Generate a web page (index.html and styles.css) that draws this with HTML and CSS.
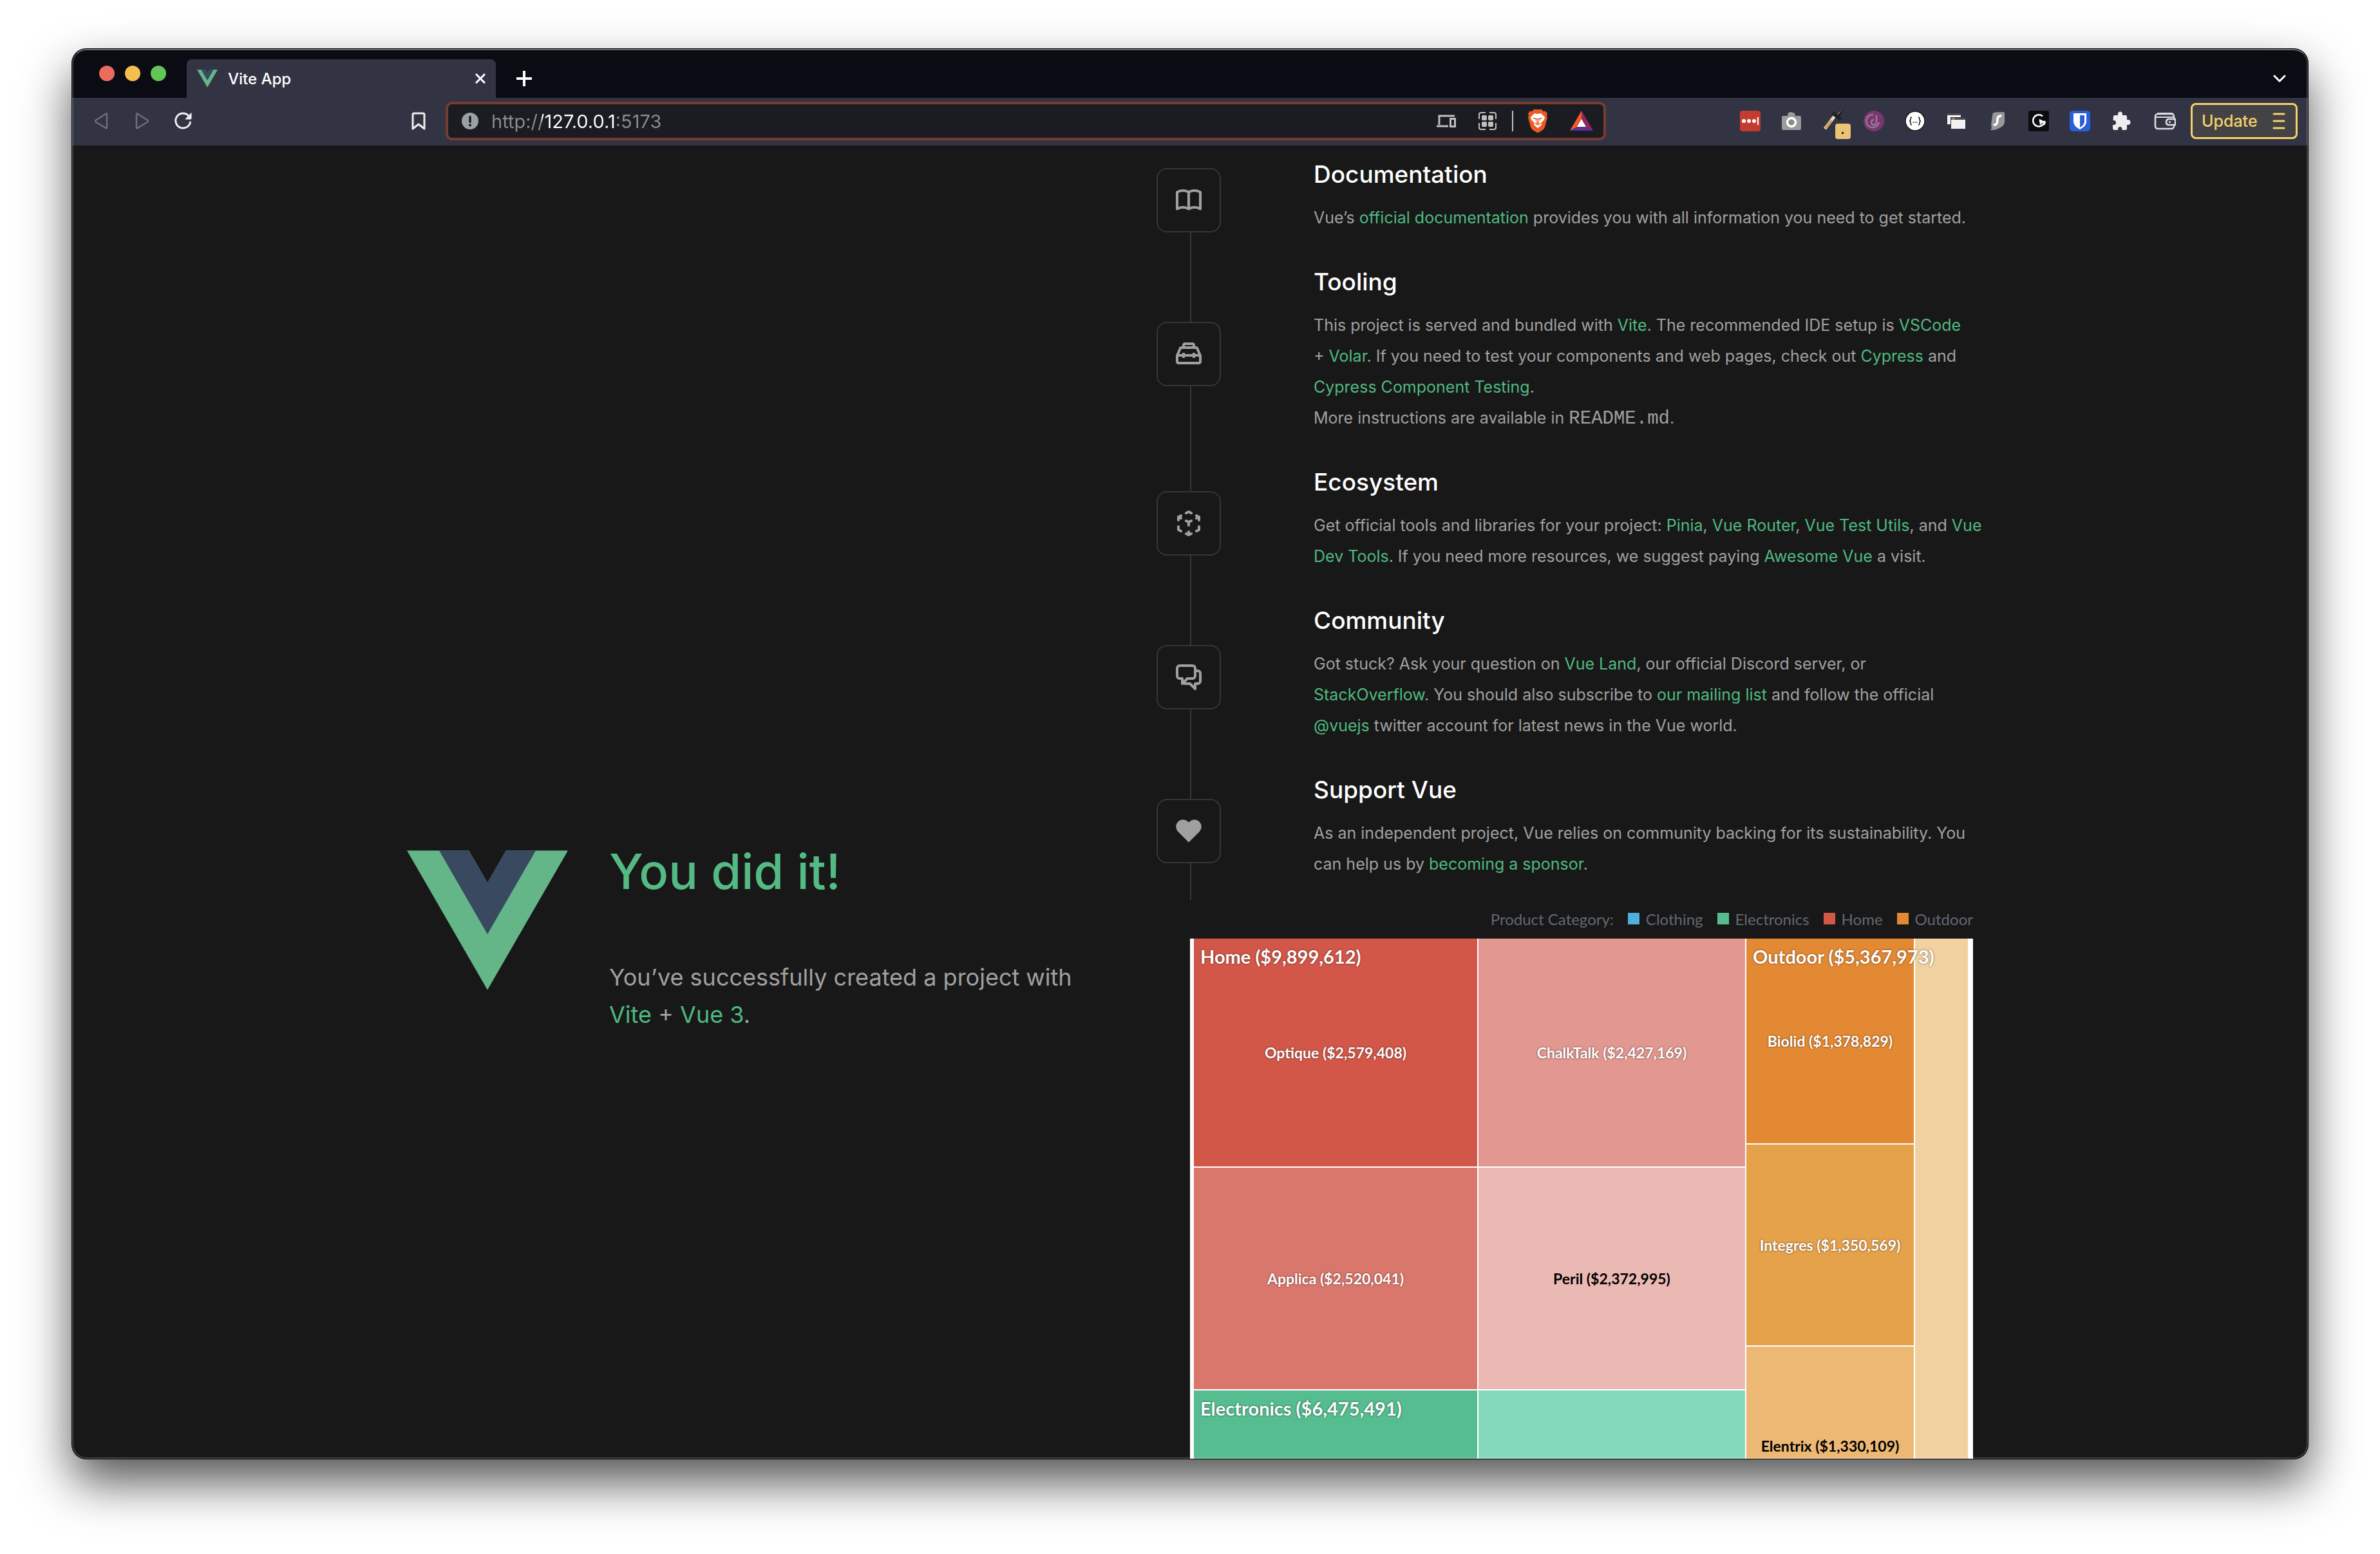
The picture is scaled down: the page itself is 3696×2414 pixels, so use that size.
FILE: index.html
```
<!DOCTYPE html>
<html lang="en">
<head>
<meta charset="utf-8">
<title>Vite App</title>
<link rel="stylesheet" href="styles.css">
</head>
<body>
<div class="window">
  <div class="tabstrip">
    <div class="lights">
      <button class="light light-close" aria-label="Close window"></button>
      <button class="light light-min" aria-label="Minimize window"></button>
      <button class="light light-max" aria-label="Zoom window"></button>
    </div>
    <div class="tab">
      <svg class="tab-icon" width="32" height="28" viewBox="0 0 261.76 226.69"><path d="M161.096.001l-30.225 52.351L100.647.001H-.005l130.877 226.688L261.749.001z" fill="#64b587"/><path d="M161.096.001l-30.225 52.351L100.647.001H52.346l78.526 136.01L209.398.001z" fill="#384960"/></svg>
      <span class="tab-title">Vite App</span>
      <button class="tab-close" aria-label="Close tab"><svg width="16" height="16" viewBox="0 0 16 16"><path d="M1 1l14 14M15 1L1 15" stroke="#fff" stroke-width="3" fill="none"/></svg></button>
    </div>
    <button class="strip-button" aria-label="New tab"><svg width="24" height="24" viewBox="0 0 24 24"><path d="M12 1v22M1 12h22" stroke="#fff" stroke-width="4" stroke-linecap="round"/></svg></button>
    <button class="strip-button strip-end" aria-label="Search tabs"><svg width="20" height="14" viewBox="0 0 20 14"><path d="M2 3l8 8 8-8" stroke="#fff" stroke-width="3" fill="none" stroke-linecap="round" stroke-linejoin="round"/></svg></button>
  </div>

  <div class="toolbar">
    <div class="nav">
      <button class="tool" aria-label="Back"><svg width="22" height="28" viewBox="0 0 22 28"><path d="M19 2.500Q20 2 20 4v20q0 2-1.500 1L3 15.500q-2-1.500 0-3z" fill="none" stroke="#6c6e78" stroke-width="2.500"/></svg></button>
      <button class="tool" aria-label="Forward"><svg width="22" height="28" viewBox="0 0 22 28"><path d="M3 2.500Q2 2 2 4v20q0 2 1.500 1L19 15.500q2-1.500 0-3z" fill="none" stroke="#6c6e78" stroke-width="2.500"/></svg></button>
      <button class="tool" aria-label="Reload"><svg width="30" height="28" viewBox="0 0 30 28"><path d="M22.500 5.500A11.500 11.500 0 1 0 25.500 16" fill="none" stroke="#eeeeef" stroke-width="3" stroke-linecap="round"/><path d="M27 1.500v8.500q0 1-1 1h-8z" fill="#eeeeef" stroke="#eeeeef" stroke-linejoin="round"/></svg></button>
      <button class="tool bookmark" aria-label="Bookmark"><svg width="22" height="28" viewBox="0 0 22 28"><path d="M2 4q0-2 2-2h14q2 0 2 2v22l-9-7-9 7z" fill="none" stroke="#eeeeef" stroke-width="3" stroke-linejoin="round"/></svg></button>
    </div>

    <div class="address">
      <svg width="26" height="26" viewBox="0 0 26 26"><circle cx="13" cy="13" r="13" fill="#9ba0a4"/><path d="M13 6.500v8" stroke="#1b1c21" stroke-width="3.400" stroke-linecap="round"/><circle cx="13" cy="19.500" r="2" fill="#1b1c21"/></svg>
      <input class="url" type="text" value="http://127.0.0.1:5173" aria-label="Address">
      <button class="tool" aria-label="Send to devices"><svg width="32" height="24" viewBox="0 0 32 24"><path d="M5 18V4h24M1 20h18" fill="none" stroke="#bfbfbf" stroke-width="3"/><rect x="22.500" y="8.500" width="7" height="12" fill="none" stroke="#bfbfbf" stroke-width="3"/></svg></button>
      <button class="tool" aria-label="QR code"><svg width="30" height="30" viewBox="0 0 30 30"><path d="M12 2H5Q2 2 2 5v7M18 2h7q3 0 3 3v7M12 28H5q-3 0-3-3v-7M18 28h7q3 0 3-3v-7" fill="none" stroke="#bfbfbf" stroke-width="2"/><g fill="#bfbfbf"><rect x="6" y="6" width="8" height="8" rx="2"/><rect x="16" y="6" width="8" height="8" rx="2"/><rect x="6" y="16" width="8" height="8" rx="2"/><rect x="16" y="16" width="8" height="8" rx="2"/></g></svg></button>
      <span class="divider"></span>
      <button class="tool" aria-label="Brave Shields"><svg width="32" height="38" viewBox="0 0 32 38"><path d="M10 1h12l3 3 3-.500 3 4-1 3 1 3-4 15q-1 3-4 5l-7 4-7-4q-3-2-4-5L1 13.500l1-3-1-3 3-4L7 4z" fill="#ee5a25"/><path d="M11 7l5 1 5-1 6 6-1 4-5 5 1 3-6 5-6-5 1-3-5-5-1-4z" fill="#fff"/><path d="M9 14.500l5 1-1 3M23 14.500l-5 1 1 3M16 15v6M12 22.500l4 2.500 4-2.500M14 20.500l2 2 2-2" fill="none" stroke="#ee5a25" stroke-width="1.500"/></svg></button>
      <button class="tool bat" aria-label="Brave Rewards"><svg width="36" height="32" viewBox="0 0 36 32"><path d="M18 0L0 31l12-6 6-11z" fill="#f05a33"/><path d="M18 0l18 31-12-6-6-11z" fill="#93255f"/><path d="M0 31h36l-12-6.500H12z" fill="#5c3195"/><path d="M18 13l-7 12h14z" fill="#fff"/></svg></button>
    </div>

    <div class="extensions">
      <button class="tool" aria-label="LastPass"><svg width="32" height="32" viewBox="0 0 32 32"><rect width="32" height="32" rx="4" fill="#c43c31"/><g fill="#fff"><circle cx="6" cy="16" r="3"/><circle cx="14" cy="16" r="3"/><circle cx="22" cy="16" r="3"/><path d="M27 10h2v12h-2z"/></g></svg></button>
      <button class="tool" aria-label="Screenshot"><svg width="32" height="32" viewBox="0 0 32 32"><path d="M3 8h7l1-5 5-1 5 2 1 4h7q2 0 2 2v17q0 3-2 3H3q-2 0-2-3V10q0-2 2-2z" fill="#9b9b9b"/><circle cx="16" cy="18" r="6.500" fill="#8a8a8a" stroke="#fff" stroke-width="3.500"/></svg></button>
      <button class="tool" aria-label="ColorZilla"><svg class="picker" width="64" height="50" viewBox="-18 -6 64 50"><path d="M2 31L18 10" stroke="#e4ddd0" stroke-width="5"/><path d="M3 30l9-12" stroke="#cf9a43" stroke-width="3.500"/><path d="M16 8l9 7M21 11l5-6" stroke="#222" stroke-width="6" stroke-linecap="round"/><path d="M22 8l4-4" stroke="#6b6b6b" stroke-width="2" stroke-linecap="round"/><rect x="18" y="23" width="24" height="24" rx="4" fill="#e9c376"/><rect x="28" y="36" width="3" height="3" fill="#222"/></svg></button>
      <button class="tool" aria-label="Grammar helper"><svg width="32" height="32" viewBox="0 0 32 32"><circle cx="16" cy="16" r="16" fill="#78386f"/><path d="M15 6a10 10 0 1 0 9 12M20 7v11a4 4 0 1 1-4-4" fill="none" stroke="#9a7a98" stroke-width="2.400"/></svg></button>
      <button class="tool" aria-label="JSON viewer"><svg width="32" height="32" viewBox="0 0 32 32"><circle cx="16" cy="16" r="15" fill="#fff" stroke="#1b1b1b" stroke-width="1.500"/><path d="M11 10q-2 0-2 3t-2 3q2 0 2 3t2 3M21 10q2 0 2 3t2 3q-2 0-2 3t-2 3" fill="none" stroke="#222" stroke-width="1.600"/><path d="M12.500 18h1.500M15.300 18h1.500M18 18h1.500" stroke="#222" stroke-width="1.400"/></svg></button>
      <button class="tool" aria-label="Window resizer"><svg width="32" height="32" viewBox="0 0 32 32"><rect x="2" y="4" width="21" height="17" fill="#f4f4f6"/><path d="M2 4h21v3H2z" fill="#4b4b4b"/><rect x="7" y="10" width="24" height="20" fill="#333445"/><rect x="8" y="11" width="22" height="17" fill="#f1f1f4"/><path d="M8 11h22v3H8z" fill="#4b4b4b"/><path d="M9 12.500h5" stroke="#d99a3b" stroke-width="1.500"/></svg></button>
      <button class="tool" aria-label="Surfshark"><svg width="32" height="32" viewBox="0 0 32 32"><path d="M10 3q2-1 15-1 2 0 2 2v13q0 9-17 13H5q3-3 1-8l2-14q0-4 2-5z" fill="#97979a"/><path d="M21 8q-5 0-5 6 0 8-5 8" fill="none" stroke="#fff" stroke-width="3.500" stroke-linecap="round"/></svg></button>
      <button class="tool" aria-label="Grammarly"><svg width="32" height="32" viewBox="0 0 32 32"><rect width="32" height="32" rx="3" fill="#0b0c10"/><path d="M22 8.500A9 9 0 1 0 25 17h-8M17 14l5 3-4 4M26 17l-2 5" fill="none" stroke="#fff" stroke-width="2.500"/></svg></button>
      <button class="tool" aria-label="Bitwarden"><svg width="32" height="32" viewBox="0 0 32 32"><rect width="32" height="32" rx="5" fill="#2a5fdb"/><path d="M6 4h20v13q0 7-10 12Q6 24 6 17z" fill="#fff"/><path d="M16 7h7v10q0 5-7 9z" fill="#2a5fdb"/></svg></button>
      <button class="tool" aria-label="Extensions"><svg width="32" height="32" viewBox="0 0 32 32"><path d="M4 9q0-2 2-2h5V5q0-3.500 3.500-3.500T18 5v2h5q2 0 2 2v5h1.500q4 0 4 4t-4 4H25v5q0 3-2 3h-5.500v-1.500q0-3.500-3.200-3.500T11 28.500V30H6q-3 0-3-3v-5h1.500Q8 22 8 18.500T4.500 15H3.500z" fill="#eeeeef"/></svg></button>
      <button class="tool wallet" aria-label="Wallet"><svg width="34" height="30" viewBox="0 0 34 30"><rect x="2" y="4" width="29" height="23" rx="4" fill="none" stroke="#dcdcdf" stroke-width="2.600"/><path d="M3 9h28M5 3h22q3 0 3 3" fill="none" stroke="#dcdcdf" stroke-width="2"/><path d="M33 12v9H22q-3-1-3-4.500t3-4.500z" fill="#323443" stroke="#dcdcdf" stroke-width="2.600"/><path d="M23 16.500h3" stroke="#dcdcdf" stroke-width="2.600"/></svg></button>
      <button class="update">Update<svg width="20" height="26" viewBox="0 0 20 26"><path d="M2 2h16M2 13h16M2 24h16" stroke="#f6d16b" stroke-width="3" stroke-linecap="round"/></svg></button>
    </div>
  </div>

  <main class="page">
    <div class="app">
      <header class="hero">
        <svg class="logo" width="250" height="217" viewBox="0 0 261.76 226.69"><path d="M161.096.001l-30.225 52.351L100.647.001H-.005l130.877 226.688L261.749.001z" fill="#64b587"/><path d="M161.096.001l-30.225 52.351L100.647.001H52.346l78.526 136.01L209.398.001z" fill="#384960"/></svg>
        <div class="greetings">
          <h1>You did it!</h1>
          <p>You’ve successfully created a project with <a href="#vite">Vite</a> + <a href="#vue">Vue 3</a>.</p>
        </div>
      </header>

      <div class="column">
        <section class="item">
          <div class="marker"><span class="rail rail-none"></span><div class="badge"><svg width="40" height="34" viewBox="0 0 20 17"><path d="M10 2.250v13M10 2.250C8.800 1.470 7.200 1 5.500 1S2.200 1.470 1 2.250v13C2.200 14.470 3.800 14 5.500 14s3.300.470 4.500 1.250c1.200-.780 2.800-1.250 4.500-1.250s3.300.470 4.500 1.250v-13C17.800 1.470 16.200 1 14.500 1S11.200 1.470 10 2.250z" class="stroke"/></svg></div><span class="rail"></span></div>
          <div class="details"><h2>Documentation</h2>
          <p>Vue’s <a href="#docs">official documentation</a> provides you with all information you need to get started.</p></div>
        </section>
        <section class="item">
          <div class="marker"><span class="rail"></span><div class="badge"><svg width="48" height="48" viewBox="0 0 24 24"><path class="fill" d="M20 18v-4h-3v1h-2v-1H9v1H7v-1H4v4h16M6.330 8l-1.740 4H7v-1h2v1h6v-1h2v1h2.410l-1.740-4H6.330M9 5v1h6V5H9m12.840 7.610c.1.220.160.480.160.8V18c0 .530-.210 1-.6 1.410-.4.4-.850.590-1.400.590H4c-.550 0-1-.190-1.400-.590C2.210 19 2 18.530 2 18v-4.590c0-.320.060-.580.160-.8L4.500 7.220C4.840 6.410 5.450 6 6.330 6H7V5c0-.550.180-1 .570-1.410C7.960 3.200 8.440 3 9 3h6c.560 0 1.040.2 1.430.590.390.410.570.860.570 1.410v1h.670c.880 0 1.490.410 1.830 1.220l2.340 5.390z"/></svg></div><span class="rail"></span></div>
          <div class="details"><h2>Tooling</h2>
          <p>This project is served and bundled with <a href="#vite">Vite</a>. The recommended IDE setup is <a href="#vscode">VSCode</a> + <a href="#volar">Volar</a>. If you need to test your components and web pages, check out <a href="#cypress">Cypress</a> and <a href="#cct">Cypress Component Testing</a>.<br>More instructions are available in <code>README.md</code>.</p></div>
        </section>
        <section class="item">
          <div class="marker"><span class="rail"></span><div class="badge"><svg width="36" height="40" viewBox="0 0 18 20"><path class="stroke" d="M9 9v2.500M7 8l2 1 2-1M15 4l2 1v2.500M15 6l2-1M7 2l2-1 2 1M1 7.500V5l2-1M1 5l2 1M7 18l2 1 2-1M9 19v-2.500M3 16l-2-1v-2.500M15 16l2-1v-2.500"/></svg></div><span class="rail"></span></div>
          <div class="details"><h2>Ecosystem</h2>
          <p class="wide">Get official tools and libraries for your project: <a href="#pinia">Pinia</a>, <a href="#router">Vue Router</a>, <a href="#test">Vue Test Utils</a>, and <a href="#devtools">Vue Dev Tools</a>. If you need more resources, we suggest paying <a href="#awesome">Awesome Vue</a> a visit.</p></div>
        </section>
        <section class="item">
          <div class="marker"><span class="rail"></span><div class="badge"><svg width="40" height="40" viewBox="0 0 20 20"><path class="stroke" d="M1 3a2 2 0 0 1 2-2h10a2 2 0 0 1 2 2v6a2 2 0 0 1-2 2H9l-4 4v-4H3a2 2 0 0 1-2-2zM15 5h2a2 2 0 0 1 2 2v6a2 2 0 0 1-2 2h-2v4l-4-4H7a2 2 0 0 1-1.410-.590"/></svg></div><span class="rail"></span></div>
          <div class="details"><h2>Community</h2>
          <p>Got stuck? Ask your question on <a href="#land">Vue Land</a>, our official Discord server, or <a href="#so">StackOverflow</a>. You should also subscribe to <a href="#mail">our mailing list</a> and follow the official <a href="#twitter">@vuejs</a> twitter account for latest news in the Vue world.</p></div>
        </section>
        <section class="item">
          <div class="marker"><span class="rail"></span><div class="badge"><svg width="40" height="40" viewBox="0 0 20 20"><path class="fill" d="M10 3.220l-.610-.600a5.500 5.500 0 0 0-7.666.105 5.500 5.500 0 0 0-.114 7.665L10 18.780l8.390-8.400a5.500 5.500 0 0 0-.114-7.665 5.500 5.500 0 0 0-7.666-.105l-.610.610z"/></svg></div><span class="rail"></span></div>
          <div class="details"><h2>Support Vue</h2>
          <p>As an independent project, Vue relies on community backing for its sustainability. You can help us by <a href="#sponsor">becoming a sponsor</a>.</p></div>
        </section>

        <div class="legend">
          <span>Product Category:</span>
          <span class="key"><i class="swatch clothing"></i>Clothing</span>
          <span class="key"><i class="swatch electronics"></i>Electronics</span>
          <span class="key"><i class="swatch home"></i>Home</span>
          <span class="key"><i class="swatch outdoor"></i>Outdoor</span>
        </div>
        <div class="treemap">
          <div class="groups">
            <div class="group group-home">
              <span class="group-name">Home ($9,899,612)</span>
              <div class="tile home-1">Optique ($2,579,408)</div>
              <div class="tile home-3">ChalkTalk ($2,427,169)</div>
              <div class="tile home-2">Applica ($2,520,041)</div>
              <div class="tile home-4 dark">Peril ($2,372,995)</div>
            </div>
            <div class="group group-electronics">
              <span class="group-name">Electronics ($6,475,491)</span>
              <div class="tile electronics-1"></div>
              <div class="tile electronics-2"></div>
            </div>
          </div>
          <div class="group group-outdoor">
            <span class="group-name">Outdoor ($5,367,973)</span>
            <div class="stack">
              <div class="tile outdoor-1">Biolid ($1,378,829)</div>
              <div class="tile outdoor-2">Integres ($1,350,569)</div>
              <div class="tile outdoor-3 dark">Elentrix ($1,330,109)</div>
              <div class="tile outdoor-4"></div>
            </div>
            <div class="tile outdoor-5"></div>
          </div>
        </div>
      </div>
    </div>
  </main>
</div>
</body>
</html>
```
FILE: styles.css
```
* {
  box-sizing: border-box;
}

body {
  margin: 0;
  background: #fff;
  font-family: Inter, "Noto Sans", sans-serif;
  color: #a0a0a0;
}

button {
  border: 0;
  padding: 0;
  background: none;
  font: inherit;
  color: inherit;
}

svg {
  display: block;
  flex: none;
}

a {
  color: #4fb981;
  text-decoration: none;
}

h1, h2, p {
  margin: 0;
}

/* Browser window */
.window {
  position: relative;
  display: flex;
  flex-direction: column;
  height: calc(100vh - 224px);
  margin: 76px 112px 148px;
  border-radius: 22px;
  overflow: hidden;
  background: #181818;
  box-shadow: 0 0 0 1px #000, 0 36px 76px rgba(0, 0, 0, 0.68);
}

.window::after {
  content: "";
  position: absolute;
  inset: 0;
  border: 2px solid rgba(255, 255, 255, 0.2);
  border-top-color: rgba(255, 255, 255, 0.4);
  border-radius: 22px;
  pointer-events: none;
}

.tabstrip {
  display: flex;
  align-items: flex-end;
  height: 76px;
  flex: none;
  background: #0b0b14;
}

.lights {
  display: flex;
  align-items: center;
  gap: 16px;
  height: 76px;
  padding: 0 32px 0 42px;
}

.light {
  width: 24px;
  height: 24px;
  border-radius: 50%;
}

.light-close { background: #ed6a5f; }
.light-min { background: #f5bf50; }
.light-max { background: #62c656; }

.tab {
  display: flex;
  align-items: center;
  gap: 16px;
  width: 480px;
  height: 60px;
  padding: 0 16px;
  border-radius: 8px 8px 0 0;
  background: #323443;
}

.tab-title {
  flex: 1;
  font-size: 24px;
  font-weight: 500;
  color: #fff;
}

.strip-button {
  display: grid;
  place-items: center;
  width: 88px;
  height: 60px;
}

.strip-end {
  margin-left: auto;
}

.toolbar {
  display: flex;
  align-items: center;
  height: 74px;
  flex: none;
  padding-bottom: 2px;
  background: #323443;
}

.nav {
  display: flex;
  width: 580px;
  padding: 0 10px 0 13px;
}

.tool {
  display: grid;
  place-items: center;
  width: 64px;
  height: 50px;
}

.bookmark {
  margin-left: auto;
}

.address {
  display: flex;
  align-items: center;
  flex: 1;
  height: 60px;
  padding: 0 2px 0 21px;
  border: 4px solid #763c32;
  border-radius: 10px;
  background: #1b1c21;
}

.url {
  flex: 1;
  min-width: 0;
  height: 50px;
  margin-left: 20px;
  padding: 0;
  border: 0;
  outline: 0;
  font: 29px Inter, sans-serif;
  color: transparent;
  background: linear-gradient(90deg, #8b8b8d 78px, #fff 78px, #fff 193px, #8b8b8d 193px);
  background-clip: text;
}

.divider {
  width: 2px;
  height: 32px;
  margin: 0 6px;
  background: #bfbfbf;
}

.bat {
  margin-left: 4px;
}

.extensions {
  display: flex;
  align-items: center;
  justify-content: flex-end;
  width: 1090px;
  padding-right: 16px;
}

.picker {
  overflow: visible;
}

.wallet {
  margin: 0 8px 0 4px;
}

.update {
  display: flex;
  align-items: center;
  justify-content: space-between;
  width: 166px;
  height: 56px;
  padding: 0 16px 0 14px;
  border: 3px solid #f6d16b;
  border-radius: 8px;
  background: #434244;
  font-size: 25px;
  font-weight: 500;
  color: #f6d16b;
}

/* Page */
.page {
  flex: 1;
  min-height: 0;
  overflow: hidden;
  padding-top: 1px;
}

.app {
  display: grid;
  grid-template-columns: 1fr 1fr;
  align-items: center;
  max-width: 2560px;
  margin: 0 auto;
  padding: 0 64px;
}

.hero {
  display: flex;
  align-items: flex-start;
  gap: 64px;
  padding-right: 144px;
}

h1 {
  margin-bottom: 104px;
  font-size: 76px;
  line-height: 64px;
  font-weight: 500;
  color: #55b984;
}

.hero p {
  font-size: 36px;
  line-height: 58px;
}

.item {
  display: flex;
  gap: 144px;
}

.marker {
  display: flex;
  flex-direction: column;
  flex: none;
  width: 100px;
  margin-left: -52px;
}

.rail {
  flex: 1;
  width: 2px;
  margin-left: 52px;
  background: #363636;
}

.rail-none {
  background: none;
}

.badge {
  display: grid;
  place-items: center;
  height: 100px;
  border: 2px solid #353535;
  border-radius: 16px;
}

.stroke {
  fill: none;
  stroke: #a0a0a0;
  stroke-width: 2;
  stroke-linecap: round;
  stroke-linejoin: round;
}

.fill {
  fill: #a0a0a0;
}

.details {
  flex: 1;
  padding: 13px 0 32px;
}

h2 {
  margin-bottom: 13px;
  font-size: 37px;
  line-height: 61px;
  font-weight: 500;
  color: #fff;
}

.details p {
  font-size: 25px;
  line-height: 48px;
}

/* Keeps the long list of links on one line */
.details .wide {
  margin-right: -24px;
}

code {
  font: 29px/1 "Liberation Mono", monospace;
}

/* Chart */
.legend {
  display: flex;
  align-items: center;
  justify-content: flex-end;
  gap: 22px;
  height: 60px;
  padding-bottom: 2px;
  font-family: Lato, sans-serif;
  font-size: 24px;
  color: #626872;
}

.key {
  display: flex;
  align-items: center;
  gap: 10px;
}

.swatch {
  width: 18px;
  height: 18px;
}

.clothing { background: #50b0dd; }
.electronics, .electronics-1 { background: #56bd90; }
.electronics-2 { background: #84d9bd; }
.home, .home-1 { background: #d35748; }
.home-2 { background: #da776c; }
.home-3 { background: #e29790; }
.home-4 { background: #ebb9b4; }
.outdoor, .outdoor-1 { background: #e38933; }
.outdoor-2 { background: #e6a14b; }
.outdoor-3 { background: #ecb874; }
.outdoor-4, .outdoor-5 { background: #f2d1a1; }

.treemap {
  display: grid;
  grid-template-columns: 856fr 344fr;
  gap: 2px;
  height: 1240px;
  padding: 0 8px 0 6px;
  background: #fff;
  font-family: Lato, sans-serif;
}

.groups {
  display: grid;
  grid-template-rows: 700fr 538fr;
  gap: 2px;
}

.group {
  position: relative;
  display: grid;
  grid-template-columns: 440fr 414fr;
  gap: 2px;
}

.group-home {
  grid-template-rows: 354fr 344fr;
}

.group-outdoor {
  grid-template-columns: 260fr 82fr;
}

.stack {
  display: grid;
  grid-template-rows: 318fr 312fr 308fr 296fr;
  gap: 2px;
}

.group-name {
  position: absolute;
  top: 10px;
  left: 10px;
  font-size: 29px;
  line-height: 36px;
  font-weight: 700;
  white-space: nowrap;
  color: #fff;
  text-shadow: 0 0 3px rgba(0, 0, 0, 0.6);
}

.tile {
  display: grid;
  place-items: center;
  font-size: 23px;
  font-weight: 700;
  color: #fff;
  text-shadow: 0 0 3px rgba(0, 0, 0, 0.6);
}

.dark {
  color: #000;
  text-shadow: none;
}
```
